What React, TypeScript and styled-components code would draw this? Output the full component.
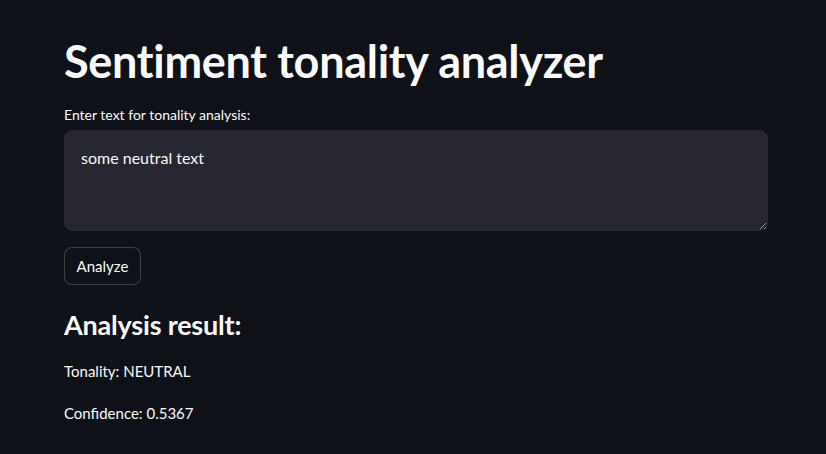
import React from "react";
import styled, { createGlobalStyle } from "styled-components";

const Global = createGlobalStyle`
  html, body { margin: 0; padding: 0; background: #0e1117; color-scheme: dark; }
  body { font-family: "Lato", "Noto Sans", sans-serif; color: rgb(250,250,250); }
  * { box-sizing: border-box; }
`;

const Page = styled.main`
  min-height: 454px;
  background: #0e1117;
  padding: 32px 58px 0 64px;
  display: flex;
  flex-direction: column;
`;

const Title = styled.h1`
  margin: 0;
  font-size: 45px;
  font-weight: 700;
  line-height: 58px;
  letter-spacing: -0.3px;
`;

const Label = styled.label`
  margin-top: 15px;
  font-size: 14px;
  line-height: 20px;
  height: 25px;
`;

const TextArea = styled.textarea`
  width: 704px;
  height: 101px;
  background: #262730;
  border: 1px solid #262730;
  border-radius: 8px;
  color: rgb(250,250,250);
  font-family: inherit;
  font-size: 16px;
  line-height: 22px;
  padding: 16px 16px 14px;
  resize: vertical;
  outline: none;
`;

const Button = styled.button`
  margin-top: 16px;
  align-self: flex-start;
  height: 38px;
  width: 77px;
  padding: 0;
  background: #0e1117;
  border: 1px solid rgba(250,250,250,0.2);
  border-radius: 8px;
  color: rgb(250,250,250);
  font-family: inherit;
  font-size: 15px;
`;

const Subtitle = styled.h3`
  margin: 22px 0 0;
  font-size: 27px;
  font-weight: 700;
  line-height: 36px;
  letter-spacing: -0.2px;
`;

const Line = styled.p<{ gap: number }>`
  margin: 0;
  margin-top: ${(p) => p.gap}px;
  font-size: 15px;
  line-height: 22px;
`;

export default function App() {
  return (
    <>
      <Global />
      <Page>
        <Title>Sentiment tonality analyzer</Title>
        <Label>Enter text for tonality analysis:</Label>
        <TextArea defaultValue="some neutral text" />
        <Button>Analyze</Button>
        <Subtitle>Analysis result:</Subtitle>
        <Line gap={17}>Tonality: NEUTRAL</Line>
        <Line gap={20}>Confidence: 0.5367</Line>
      </Page>
    </>
  );
}
